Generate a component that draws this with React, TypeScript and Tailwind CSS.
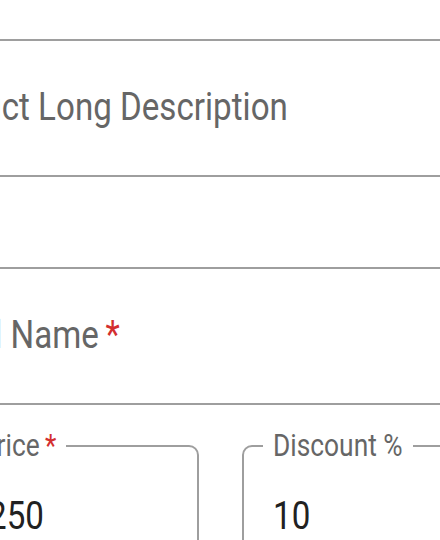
const label = "text-[#666666]"

function Req() {
  return <span className="text-[#d32f2f]">{"\u2009*"}</span>
}

export default function App() {
  return (
    <div className="w-[440px] h-[540px] overflow-hidden bg-white font-['Roboto','Liberation_Sans',sans-serif]">
      <div className="-ml-[44px] w-[560px] pt-[39px]">
        {/* long description */}
        <div className="h-[138px] border-2 border-[#9e9e9e] rounded-[10px] pt-[47px] pl-[2px]">
          <span className={`block origin-left scale-x-[0.85] text-[39px] leading-none whitespace-nowrap -ml-[46px] ${label}`}>
            Product Long Description
          </span>
        </div>

        {/* name */}
        <div className="mt-[90px] h-[138px] border-2 border-[#9e9e9e] rounded-[10px] pt-[47px]">
          <span className={`block origin-left scale-x-[0.85] text-[39px] leading-none whitespace-nowrap -ml-[42px] ${label}`}>
            Brand Name<Req />
          </span>
        </div>

        {/* price + discount */}
        <div className="mt-[26px] flex gap-[43px]">
          <fieldset className="w-[243px] h-[160px] m-0 p-0 border-2 border-[#9e9e9e] rounded-[10px] min-w-0">
            <legend className="ml-[12px] w-[96px] p-0 pl-[10px] h-[30px]">
              <span className={`block origin-left scale-x-[0.85] text-[31px] leading-[30px] whitespace-nowrap ${label}`}>
                Price<Req />
              </span>
            </legend>
            <div className="pt-[36px] pl-[30px]">
              <span className="block origin-left scale-x-[0.85] text-[39px] leading-none text-[#212121]">250</span>
            </div>
          </fieldset>
          <fieldset className="w-[243px] h-[160px] m-0 p-0 border-2 border-[#9e9e9e] rounded-[10px] min-w-0">
            <legend className="ml-[19px] w-[150px] p-0 pl-[10px] h-[30px]">
              <span className={`block origin-left scale-x-[0.85] text-[31px] leading-[30px] whitespace-nowrap ${label}`}>
                Discount %
              </span>
            </legend>
            <div className="pt-[36px] pl-[29px]">
              <span className="block origin-left scale-x-[0.85] text-[39px] leading-none text-[#212121]">10</span>
            </div>
          </fieldset>
        </div>
      </div>
    </div>
  )
}
